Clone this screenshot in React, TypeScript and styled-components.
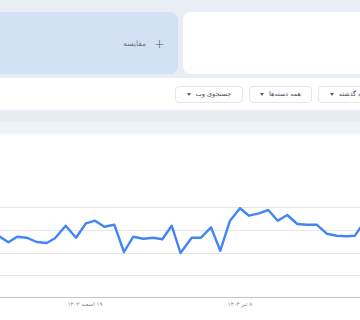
import React from 'react'
import styled, { createGlobalStyle } from 'styled-components'

const points: [number, number][] = [
  [-9, 231], [0, 236.7], [8.3, 242.3], [17.3, 236.7], [26.7, 237.7], [36.7, 242], [46.7, 243],
  [55, 238.3], [65.7, 225.7], [76, 237.7], [86, 223.3], [95, 220.7], [104.3, 226.7],
  [114.3, 224.7], [124, 252], [133.3, 236.7], [143.3, 238.7], [153.3, 237.7], [162.3, 239.3],
  [171.7, 225.7], [180.5, 253], [191.7, 237.7], [201, 237.7], [211, 227.3], [220.3, 250.7],
  [230, 220.7], [240, 208.3], [249, 215.7], [259, 213.3], [268.3, 210], [277.7, 220.7],
  [287.3, 215], [297.3, 224], [306.7, 224.7], [316.7, 224.7], [326.7, 233.7], [336.7, 235.7],
  [346, 236.3], [355, 235.7], [364, 222]
]

const CHART_TOP = 134
const gridLines = [207, 230, 253, 275]
const AXIS_Y = 297

const filters = [
  { label: 'جستجوی وب', width: 68 },
  { label: 'همه دسته‌ها', width: 63 },
  { label: '۱۲ ماه گذشته', width: 70 }
]

const App = () => {
  const path = points.map(([x, y], i) => `${i ? 'L' : 'M'}${x} ${y - CHART_TOP}`).join(' ')

  return (
    <StyledRoot>
      <GlobalStyle />
      <StyledTopBand>
        <StyledCardRow>
          <StyledCompareCard>
            <StyledCompareLabel dir='rtl'>
              <StyledPlus>+</StyledPlus>
              مقایسه
            </StyledCompareLabel>
          </StyledCompareCard>
          <StyledTermCard />
        </StyledCardRow>
      </StyledTopBand>

      <StyledFilterBar>
        {filters.map((f) => (
          <StyledFilterButton key={f.label} $width={f.width}>
            <StyledCaret />
            <span dir='rtl'>{f.label}</span>
          </StyledFilterButton>
        ))}
      </StyledFilterBar>

      <StyledDivider />
      <StyledChartHeader />

      <StyledChart>
        <svg width='360' height='186' viewBox='0 0 360 186'>
          {gridLines.map((y) => (
            <line key={y} x1='0' x2='360' y1={y - CHART_TOP + 0.5} y2={y - CHART_TOP + 0.5} stroke='#e6e6e6' strokeWidth='1' />
          ))}
          <line x1='0' x2='360' y1={AXIS_Y - CHART_TOP + 0.5} y2={AXIS_Y - CHART_TOP + 0.5} stroke='#c4c4c4' strokeWidth='1' />
          <path d={path} fill='none' stroke='#4285f4' strokeWidth='2.4' strokeLinejoin='round' strokeLinecap='round' />
          <StyledAxisText x='85' y={AXIS_Y - CHART_TOP + 9} textAnchor='middle' direction='rtl'>
            ۱۹ اسفند ۱۴۰۲
          </StyledAxisText>
          <StyledAxisText x='240' y={AXIS_Y - CHART_TOP + 9} textAnchor='middle' direction='rtl'>
            ۸ تیر ۱۴۰۳
          </StyledAxisText>
        </svg>
      </StyledChart>
    </StyledRoot>
  )
}

export default App

const GlobalStyle = createGlobalStyle`
  html, body {
    margin: 0;
    padding: 0;
    background: #fff;
    overflow: hidden;
  }
  body {
    font-family: "DejaVu Sans", "Noto Sans", sans-serif;
  }
`

const StyledRoot = styled.div`
  width: 360px;
  height: 320px;
  overflow: hidden;
  display: flex;
  flex-direction: column;
`

const StyledTopBand = styled.div`
  background: #e9eef6;
  padding: 12px 0 4px;
`

const StyledCardRow = styled.div`
  display: grid;
  grid-template-columns: 178px 1fr;
  gap: 5px;
  height: 62px;
`

const StyledCompareCard = styled.div`
  background: #d3e1f4;
  border-radius: 0 8px 8px 0;
  display: flex;
  align-items: center;
  justify-content: flex-end;
  padding-right: 13px;
`

const StyledCompareLabel = styled.div`
  display: flex;
  align-items: center;
  gap: 8px;
  font-size: 7.5px;
  color: #6f7378;
`

const StyledPlus = styled.span`
  font-size: 13px;
  font-weight: 300;
  color: #5f6368;
  line-height: 1;
`

const StyledTermCard = styled.div`
  background: #fff;
  border-radius: 8px 0 0 8px;
`

const StyledFilterBar = styled.div`
  background: #fff;
  height: 32px;
  display: flex;
  align-items: center;
  gap: 6px;
  padding-left: 175px;
  white-space: nowrap;
`

const StyledFilterButton = styled.div<{ $width: number }>`
  flex: 0 0 ${({ $width }) => $width}px;
  height: 17px;
  box-sizing: border-box;
  border: 1px solid #e3e5e9;
  border-radius: 4px;
  display: flex;
  align-items: center;
  justify-content: center;
  gap: 5px;
  font-size: 6.5px;
  color: #4a4e53;
`

const StyledCaret = styled.span`
  width: 0;
  height: 0;
  border-left: 2.5px solid transparent;
  border-right: 2.5px solid transparent;
  border-top: 3px solid #5f6368;
`

const StyledDivider = styled.div`
  height: 12px;
  background: #e8ecf5;
`

const StyledChartHeader = styled.div`
  height: 12px;
  background: #eff2f8;
`

const StyledChart = styled.div`
  flex: 1;
  background: #fff;
  svg {
    display: block;
  }
`

const StyledAxisText = styled.text`
  font-size: 5.5px;
  fill: #80868b;
  font-family: "DejaVu Sans", sans-serif;
`
